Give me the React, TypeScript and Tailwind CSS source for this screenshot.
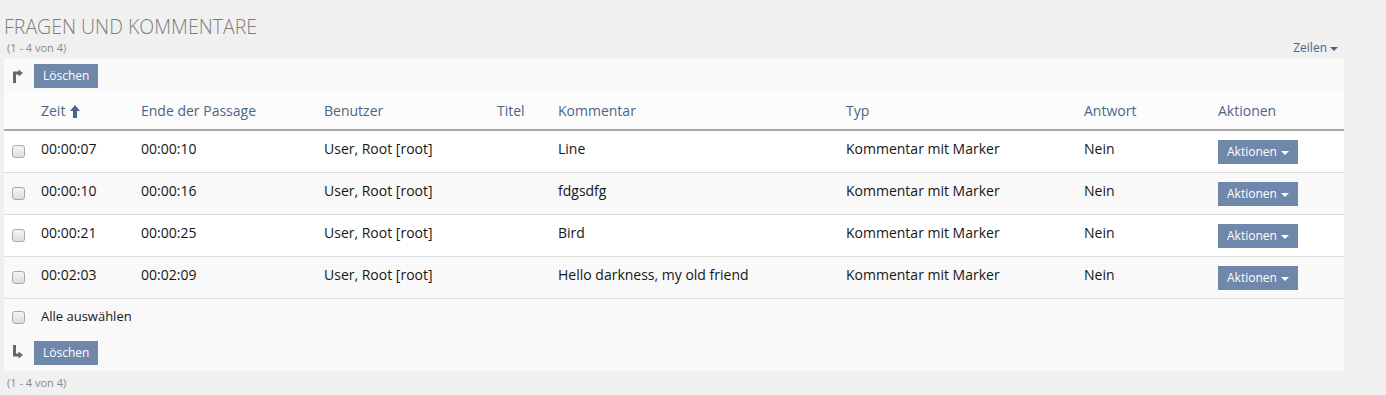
import React from 'react';

const rows = [
    { zeit: '00:00:07', ende: '00:00:10', kommentar: 'Line' },
    { zeit: '00:00:10', ende: '00:00:16', kommentar: 'fdgsdfg' },
    { zeit: '00:00:21', ende: '00:00:25', kommentar: 'Bird' },
    { zeit: '00:02:03', ende: '00:02:09', kommentar: 'Hello darkness, my old friend' },
];

const headers = [
    { label: 'Zeit', w: 'w-[100px]', sort: true },
    { label: 'Ende der Passage', w: 'w-[183px]' },
    { label: 'Benutzer', w: 'w-[173px]' },
    { label: 'Titel', w: 'w-[61px]' },
    { label: 'Kommentar', w: 'w-[288px]' },
    { label: 'Typ', w: 'w-[238px]' },
    { label: 'Antwort', w: 'w-[134px]' },
    { label: 'Aktionen', w: 'w-[134px]' },
];

function Checkbox() {
    return (
        <span className="inline-block w-[13px] h-[13px] rounded-[3px] border border-[#a9a9a9] bg-gradient-to-b from-[#f4f4f4] to-[#dedede]" />
    );
}

function Caret() {
    return (
        <span className="inline-block ml-[4px] align-middle w-0 h-0 border-l-[4px] border-r-[4px] border-t-[4px] border-l-transparent border-r-transparent" />
    );
}

function ArrowIcon({ down }: { down?: boolean }) {
    return down ? (
        <svg width="12" height="15" viewBox="0 0 12 15" className="block">
            <path d="M2.5 0 V10 H7" stroke="#666" strokeWidth="3" fill="none" />
            <path d="M6.5 6.5 L11 10 L6.5 13.5 Z" fill="#666" />
        </svg>
    ) : (
        <svg width="12" height="15" viewBox="0 0 12 15" className="block">
            <path d="M2.5 15 V5 H7" stroke="#666" strokeWidth="3" fill="none" />
            <path d="M6.5 1.5 L11 5 L6.5 8.5 Z" fill="#666" />
        </svg>
    );
}

function DeleteBar({ down }: { down?: boolean }) {
    return (
        <div className="flex items-center h-[35px] pl-[8px] gap-[10px] bg-[#f9f9f9]">
            <ArrowIcon down={down} />
            <button className="h-[24px] px-[9px] bg-[#6f87aa] text-white text-[12px] leading-[24px]">Löschen</button>
        </div>
    );
}

export default function App() {
    return (
        <div className="min-h-[395px] bg-[#f0f0f0] pl-[4px] pr-[42px] pt-[14px] font-['Open_Sans',sans-serif]">
            {/* Title */}
            <h1 className="text-[19.5px] leading-[26px] font-light text-[#7d7d7d] uppercase">Fragen und Kommentare</h1>
            <div className="flex items-start justify-between h-[18px]">
                <span className="pl-[3px] text-[11px] text-[#8a8a8a] leading-[16px]">(1 - 4 von 4)</span>
                <span className="pr-[6px] text-[12px] text-[#4c6586] leading-[16px]">
                    Zeilen
                    <span className="inline-block ml-[3px] align-middle w-0 h-0 border-l-[4px] border-r-[4px] border-t-[4px] border-l-transparent border-r-transparent border-t-[#4c6586]" />
                </span>
            </div>

            {/* Panel */}
            <div className="w-[1340px] bg-[#f9f9f9]">
                <DeleteBar />
                <table className="w-[1340px] table-fixed border-collapse text-[14px] text-[#161616]">
                    <thead>
                        <tr className="bg-[#fcfcfc] border-b-2 border-[#a8a8a8]">
                            <th className="w-[29px]" />
                            {headers.map((h) => (
                                <th key={h.label} className={`${h.w} h-[37px] pl-[8px] text-left font-normal text-[#4c6586] leading-[20px]`}>
                                    <span className="inline-flex items-center gap-[5px]">
                                        {h.label}
                                        {h.sort && (
                                            <svg width="10" height="13" viewBox="0 0 10 13">
                                                <path d="M5 0 L10 6 H7 V13 H3 V6 H0 Z" fill="#4c6586" />
                                            </svg>
                                        )}
                                    </span>
                                </th>
                            ))}
                        </tr>
                    </thead>
                    <tbody>
                        {rows.map((r, i) => (
                            <tr key={r.zeit} className={`${i % 2 === 0 ? 'bg-white' : 'bg-[#f9f9f9]'} border-b border-[#dddddd] align-top`}>
                                <td className="pl-[8px] pt-[11px]">
                                    <Checkbox />
                                </td>
                                <td className="pl-[8px] pt-[8px] pb-[9px] leading-[20px]">{r.zeit}</td>
                                <td className="pl-[8px] pt-[8px] pb-[9px] leading-[20px]">{r.ende}</td>
                                <td className="pl-[8px] pt-[8px] pb-[9px] leading-[20px]">User, Root [root]</td>
                                <td className="pl-[8px] pt-[8px] pb-[9px] leading-[20px]" />
                                <td className="pl-[8px] pt-[8px] pb-[9px] leading-[20px]">{r.kommentar}</td>
                                <td className="pl-[8px] pt-[8px] pb-[9px] leading-[20px]">Kommentar mit Marker</td>
                                <td className="pl-[8px] pt-[8px] pb-[9px] leading-[20px]">Nein</td>
                                <td className="pl-[8px] pt-[9px] pb-[8px]">
                                    <button className="block h-[24px] px-[9px] bg-[#6f87aa] text-white text-[12px] leading-[24px] whitespace-nowrap">
                                        Aktionen
                                        <Caret />
                                    </button>
                                </td>
                            </tr>
                        ))}
                    </tbody>
                </table>
                <div className="flex items-center h-[36px] pl-[8px] gap-[16px] text-[13px] text-[#161616] bg-[#f9f9f9]">
                    <Checkbox />
                    <span>Alle auswählen</span>
                </div>
                <div className="pb-[1px]">
                    <DeleteBar down />
                </div>
            </div>
            <div className="pl-[3px] pt-[5px] text-[11px] text-[#8a8a8a] leading-[14px]">(1 - 4 von 4)</div>
        </div>
    );
}
